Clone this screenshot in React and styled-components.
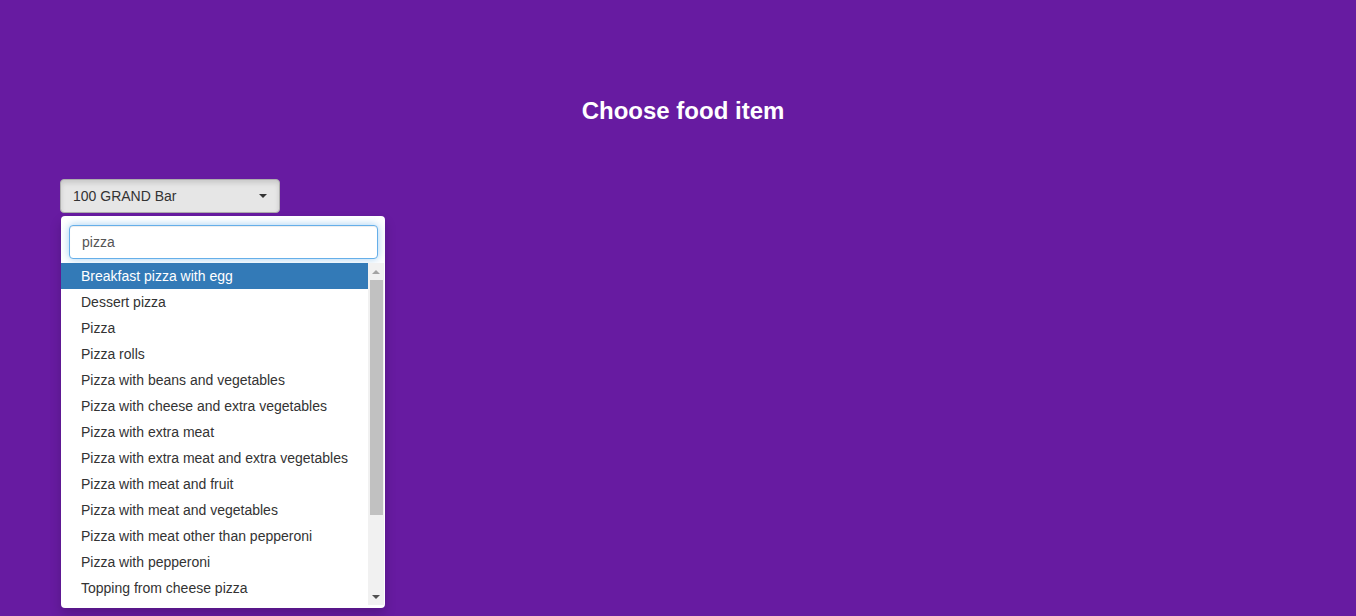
import React from "react";
import styled, { createGlobalStyle } from "styled-components";

const Global = createGlobalStyle`
  html, body { margin: 0; padding: 0; }
  body {
    background: #671ba1;
    font-family: "Liberation Sans", Arial, Helvetica, sans-serif;
    font-size: 14px;
    color: #333;
    min-height: 616px;
  }
  * { box-sizing: border-box; }
`;

const Page = styled.div`
  padding: 98px 60px 0;
`;

const Title = styled.h2`
  margin: 0;
  padding-left: 10px;
  text-align: center;
  color: #fff;
  font-size: 24px;
  font-weight: 700;
  line-height: 26px;
`;

const Picker = styled.div`
  position: relative;
  margin-top: 55px;
  width: 220px;
`;

const Toggle = styled.button`
  display: flex;
  align-items: center;
  justify-content: space-between;
  width: 220px;
  height: 34px;
  padding: 0 12px 0 12px;
  background: #e6e6e6;
  border: 1px solid #adadad;
  border-radius: 4px;
  font-family: inherit;
  font-size: 14px;
  color: #333;
  box-shadow: inset 0 3px 5px rgba(0, 0, 0, 0.125);
`;

const Caret = styled.span`
  width: 0;
  height: 0;
  border-top: 4px solid #333;
  border-left: 4px solid transparent;
  border-right: 4px solid transparent;
`;

const Menu = styled.div`
  position: absolute;
  top: 37px;
  left: 1px;
  width: 324px;
  height: 392px;
  background: #fff;
  border-radius: 4px;
  box-shadow: 0 6px 12px rgba(0, 0, 0, 0.175);
  display: flex;
  flex-direction: column;
  padding: 9px 0 3px;
`;

const SearchBox = styled.div`
  padding: 0 7px 0 8px;
`;

const SearchInput = styled.input`
  display: block;
  width: 100%;
  height: 34px;
  padding: 6px 12px;
  border: 1px solid #66afe9;
  border-radius: 4px;
  outline: none;
  font-family: inherit;
  font-size: 14px;
  color: #555;
  box-shadow: inset 0 1px 1px rgba(0, 0, 0, 0.075), 0 0 8px rgba(102, 175, 233, 0.6);
`;

const ListArea = styled.div`
  margin-top: 4px;
  flex: 1;
  display: flex;
  min-height: 0;
`;

const List = styled.ul`
  list-style: none;
  margin: 0;
  padding: 0;
  flex: 1;
  overflow: hidden;
`;

const Item = styled.li`
  height: 26px;
  line-height: 26px;
  padding-left: 20px;
  white-space: nowrap;
  background: ${(p) => (p.$active ? "#337ab7" : "transparent")};
  color: ${(p) => (p.$active ? "#fff" : "#333")};
`;

const Scrollbar = styled.div`
  width: 16px;
  margin-right: 1px;
  background: #f1f1f1;
  display: flex;
  flex-direction: column;
  align-items: stretch;
`;

const Arrow = styled.div`
  height: 17px;
  display: flex;
  align-items: center;
  justify-content: center;
  &::after {
    content: "";
    width: 0;
    height: 0;
    border-left: 4px solid transparent;
    border-right: 4px solid transparent;
    ${(p) =>
      p.$down
        ? `border-top: 4px solid #505050;`
        : `border-bottom: 4px solid #a3a3a3;`}
  }
`;

const Track = styled.div`
  flex: 1;
  display: flex;
  flex-direction: column;
`;

const Thumb = styled.div`
  height: 235px;
  margin: 0 1px 0 2px;
  background: #c1c1c1;
`;

const items = [
  "Breakfast pizza with egg",
  "Dessert pizza",
  "Pizza",
  "Pizza rolls",
  "Pizza with beans and vegetables",
  "Pizza with cheese and extra vegetables",
  "Pizza with extra meat",
  "Pizza with extra meat and extra vegetables",
  "Pizza with meat and fruit",
  "Pizza with meat and vegetables",
  "Pizza with meat other than pepperoni",
  "Pizza with pepperoni",
  "Topping from cheese pizza",
];

export default function App() {
  return (
    <>
      <Global />
      <Page>
        <Title>Choose food item</Title>
        <Picker>
          <Toggle type="button">
            <span>100 GRAND Bar</span>
            <Caret />
          </Toggle>
          <Menu>
            <SearchBox>
              <SearchInput defaultValue="pizza" />
            </SearchBox>
            <ListArea>
              <List>
                {items.map((t, i) => (
                  <Item key={t} $active={i === 0}>
                    {t}
                  </Item>
                ))}
              </List>
              <Scrollbar>
                <Arrow />
                <Track>
                  <Thumb />
                </Track>
                <Arrow $down />
              </Scrollbar>
            </ListArea>
          </Menu>
        </Picker>
      </Page>
    </>
  );
}
